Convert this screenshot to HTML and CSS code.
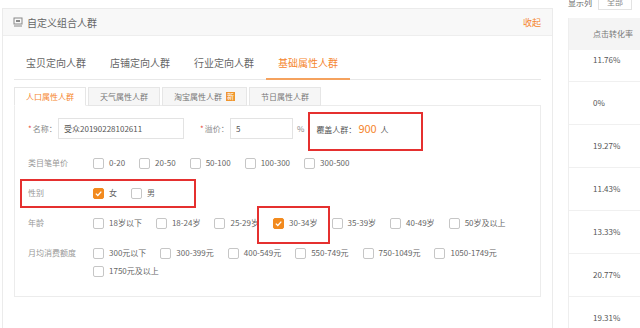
FILE: index.html
```html
<!DOCTYPE html>
<html>
<head>
  <meta charset="utf-8">
  <title>自定义组合人群</title>
  <link rel="stylesheet" href="styles.css">
</head>
<body>
<div class="page">

  <!-- left: crowd panel -->
  <div class="panel">
    <div class="panel-head">
      <span class="head-title">
        <svg class="head-icon" width="10" height="10" viewBox="0 0 10 10">
          <rect x="1" y="1" width="8" height="6" fill="none" stroke="#888" stroke-width="1"/>
          <rect x="3" y="3" width="4" height="2" fill="#888"/>
          <line x1="1" y1="9" x2="9" y2="9" stroke="#888" stroke-width="1"/>
        </svg>自定义组合人群</span>
      <a class="head-fold">收起</a>
    </div>

    <div class="panel-body">
      <div class="main-tabs">
        <div class="main-tab">宝贝定向人群</div>
        <div class="main-tab">店铺定向人群</div>
        <div class="main-tab">行业定向人群</div>
        <div class="main-tab active">基础属性人群</div>
      </div>

      <div class="sub-tabs">
        <div class="sub-tab active">人口属性人群</div>
        <div class="sub-tab">天气属性人群</div>
        <div class="sub-tab">淘宝属性人群<span class="badge">新</span></div>
        <div class="sub-tab">节日属性人群</div>
      </div>

      <div class="form-box">
        <div class="form-top">
          <span class="field-label"><i>*</i>名称：</span>
          <input class="text-input name-input" type="text" value="受众20190228102611">
          <span class="field-label premium"><i>*</i>溢价：</span>
          <input class="text-input rate-input" type="text" value="5">
          <span class="unit">%</span>
          <span class="cover">覆盖人群：<b>900</b> 人<span class="mark mark-cover"></span></span>
        </div>

        <div class="form-row">
          <div class="row-label">类目笔单价</div>
          <div class="row-opts">
            <span class="opt"><span class="cb"></span>0-20</span>
            <span class="opt"><span class="cb"></span>20-50</span>
            <span class="opt"><span class="cb"></span>50-100</span>
            <span class="opt"><span class="cb"></span>100-300</span>
            <span class="opt"><span class="cb"></span>300-500</span>
          </div>
        </div>

        <div class="form-row">
          <span class="mark mark-sex"></span>
          <div class="row-label">性别</div>
          <div class="row-opts">
            <span class="opt"><span class="cb on"><svg width="9" height="9" viewBox="0 0 9 9"><path d="M1.8 4.6 L3.8 6.5 L7.3 2.6" fill="none" stroke="#fff" stroke-width="1.3"/></svg></span>女</span>
            <span class="opt"><span class="cb"></span>男</span>
          </div>
        </div>

        <div class="form-row">
          <div class="row-label">年龄</div>
          <div class="row-opts">
            <span class="opt"><span class="cb"></span>18岁以下</span>
            <span class="opt"><span class="cb"></span>18-24岁</span>
            <span class="opt"><span class="cb"></span>25-29岁</span>
            <span class="opt picked"><span class="cb on"><svg width="9" height="9" viewBox="0 0 9 9"><path d="M1.8 4.6 L3.8 6.5 L7.3 2.6" fill="none" stroke="#fff" stroke-width="1.3"/></svg></span>30-34岁<span class="mark mark-age"></span></span>
            <span class="opt"><span class="cb"></span>35-39岁</span>
            <span class="opt"><span class="cb"></span>40-49岁</span>
            <span class="opt"><span class="cb"></span>50岁及以上</span>
          </div>
        </div>

        <div class="form-row">
          <div class="row-label">月均消费额度</div>
          <div class="row-opts">
            <span class="opt"><span class="cb"></span>300元以下</span>
            <span class="opt"><span class="cb"></span>300-399元</span>
            <span class="opt"><span class="cb"></span>400-549元</span>
            <span class="opt"><span class="cb"></span>550-749元</span>
            <span class="opt"><span class="cb"></span>750-1049元</span>
            <span class="opt"><span class="cb"></span>1050-1749元</span>
            <span class="opt"><span class="cb"></span>1750元及以上</span>
          </div>
        </div>
      </div>
    </div>
  </div>

  <!-- right: report column -->
  <div class="side">
    <div class="side-top">
      <span class="side-cap">显示列</span>
      <span class="side-select">全部</span>
    </div>
    <div class="report">
      <div class="report-head">点击转化率</div>
      <div class="report-cell first">11.76%</div>
      <div class="report-cell">0%</div>
      <div class="report-cell">19.27%</div>
      <div class="report-cell">11.43%</div>
      <div class="report-cell">13.33%</div>
      <div class="report-cell">20.77%</div>
      <div class="report-cell">19.31%</div>
    </div>
  </div>

</div>
</body>
</html>
```

FILE: styles.css
```css
body {
  margin: 0;
  padding: 0;
  background-color: #fff;
  font-family: "Noto Sans CJK SC", "Noto Sans", sans-serif;
  color: #666;
  overflow: hidden;
}

.page {
  display: flex;
  align-items: flex-start;
  height: 328px;
}

/* panel */

.panel {
  width: 551px;
  flex-shrink: 0;
  margin: 8px 0 0 2px;
  height: 340px;
  border: 1px solid #ebebeb;
  box-sizing: border-box;
}

.panel-head {
  display: flex;
  align-items: center;
  justify-content: space-between;
  height: 26px;
  padding: 0 11px 0 10px;
  background-color: #f8f8f8;
  border-bottom: 1px solid #eee;
}

.head-title {
  display: flex;
  align-items: center;
  font-size: 10px;
  color: #666;
}

.head-icon {
  margin-right: 4px;
}

.head-fold {
  font-size: 9px;
  color: #f5862e;
}

.panel-body {
  padding: 0 11px 0 11px;
}

.main-tabs {
  display: flex;
  margin-top: 18px;
  border-bottom: 1px solid #e8e8e8;
}

.main-tab {
  font-size: 10px;
  line-height: 18px;
  padding: 0 12px 6px;
  border-bottom: 2px solid transparent;
  margin-bottom: -1px;
  color: #666;
}

.main-tab.active {
  color: #f5862e;
  border-bottom-color: #f5a25e;
}

.sub-tabs {
  display: flex;
  margin-top: 7px;
  position: relative;
  z-index: 1;
}

.sub-tab {
  display: flex;
  align-items: center;
  height: 17px;
  padding: 0 11px;
  margin-right: 2px;
  font-size: 8px;
  color: #777;
  background-color: #f6f6f6;
  border: 1px solid #e6e6e6;
}

.sub-tab.active {
  background-color: #fff;
  color: #f5862e;
  border-bottom-color: #fff;
}

.badge {
  display: inline-block;
  width: 9px;
  height: 9px;
  line-height: 9px;
  margin-left: 4px;
  font-size: 7px;
  text-align: center;
  color: #fff;
  background-color: #f0962e;
}

/* form */

.form-box {
  margin-top: -1px;
  border: 1px solid #ececec;
  padding: 12px 3px 16px 13px;
}

.form-top {
  display: flex;
  align-items: center;
  font-size: 8px;
}

.field-label {
  color: #888;
  width: 30px;
}

.field-label i {
  font-style: normal;
  color: #e84a3c;
  margin-right: 1px;
}

.premium {
  margin-left: 16px;
}

.text-input {
  height: 21px;
  box-sizing: border-box;
  border: 1px solid #e3e3e3;
  padding: 0 5px;
  font-family: "Noto Sans CJK SC", "Noto Sans", sans-serif;
  font-size: 8px;
  color: #555;
  outline: none;
}

.name-input {
  width: 126px;
}

.rate-input {
  width: 63px;
}

.unit {
  margin-left: 4px;
  color: #888;
}

.cover {
  position: relative;
  margin-left: 12px;
  line-height: 18px;
  color: #555;
}

.cover b {
  font-weight: normal;
  font-size: 11px;
  color: #f5862e;
  margin: 0 2px;
}

.form-row {
  position: relative;
  display: flex;
  margin-top: 12px;
  font-size: 8px;
  line-height: 18px;
}

.form-top + .form-row {
  margin-top: 15px;
}

.row-label {
  width: 65px;
  flex-shrink: 0;
  color: #999;
}

.row-opts {
  display: flex;
  flex-wrap: wrap;
  flex: 1;
}

.opt {
  position: relative;
  display: flex;
  align-items: center;
  margin-right: 14px;
  color: #666;
  white-space: nowrap;
}

.opt:last-child {
  margin-right: 0;
}

.cb {
  display: flex;
  align-items: center;
  justify-content: center;
  width: 11px;
  height: 11px;
  box-sizing: border-box;
  margin-right: 5px;
  border: 1px solid #c6c6c6;
  border-radius: 2px;
  background-color: #fff;
}

.cb.on {
  background-color: #f28a1e;
  border-color: #f28a1e;
}

/* red annotation frames */

.mark {
  position: absolute;
  box-sizing: border-box;
  border: 2px solid #e5302f;
}

.mark-cover {
  left: -8px;
  top: -7px;
  width: 115px;
  height: 39px;
}

.mark-sex {
  left: -8px;
  top: -5px;
  width: 176px;
  height: 29px;
}

.mark-age {
  left: -16px;
  top: -8px;
  width: 73px;
  height: 38px;
}

/* side report */

.side {
  margin-left: 15px;
  width: 120px;
  flex-shrink: 0;
}

.side-top {
  display: flex;
  align-items: center;
  margin-top: -5px;
  height: 14px;
  font-size: 8px;
  color: #666;
}

.side-cap {
  width: 30px;
  white-space: nowrap;
}

.side-select {
  height: 14px;
  line-height: 14px;
  padding: 0 8px;
  border: 1px solid #e3e3e3;
  color: #888;
}

.report {
  margin-top: 9px;
  border-left: 1px solid #eee;
}

.report-head {
  height: 32px;
  line-height: 32px;
  padding-left: 24px;
  background-color: #f4f4f4;
  font-size: 8px;
  color: #777;
}

.report-cell {
  height: 42px;
  line-height: 42px;
  padding-left: 24px;
  border-bottom: 1px solid #f0f0f0;
  font-size: 8px;
  color: #555;
}

.report-cell.first {
  height: 31px;
  line-height: 20px;
}
```
